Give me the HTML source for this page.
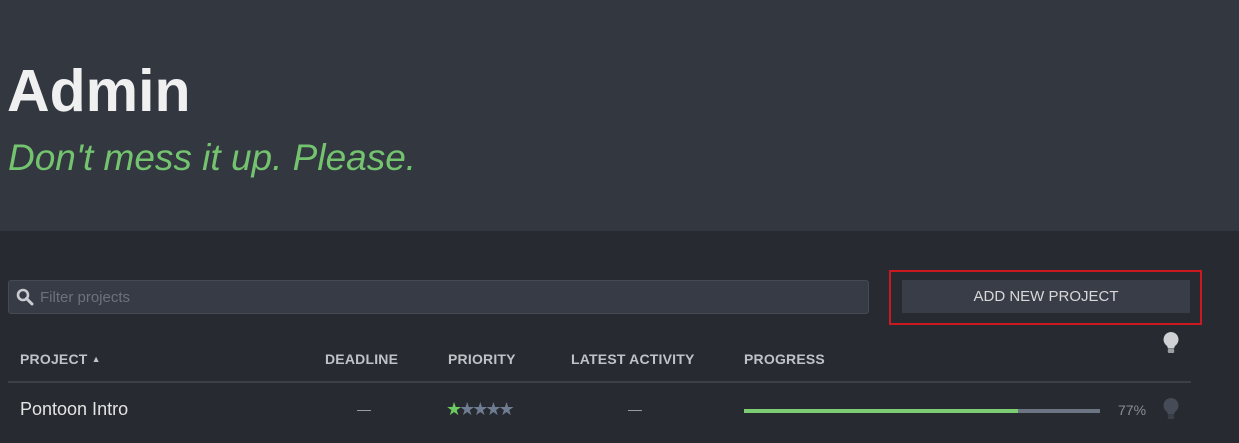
<!DOCTYPE html>
<html><head><meta charset="utf-8"><style>
body{margin:0;width:1239px;height:443px;background:#272a30;font-family:"Liberation Sans",sans-serif;overflow:hidden;position:relative}
.hdr{position:absolute;left:0;top:0;width:1239px;height:231px;background:#323740}
.t{position:absolute;left:7px;top:56px;font-size:59px;font-weight:bold;color:#f0f0f0;line-height:70px}
.s{position:absolute;left:8px;top:134px;font-size:37px;font-style:italic;color:#74c46f;line-height:48px}
.search{position:absolute;left:8px;top:280px;width:859px;height:32px;background:#373b45;border:1px solid #454a54;border-radius:3px}
.search span{position:absolute;left:31px;top:8px;font-size:15px;color:#6c717a}
.btn{position:absolute;left:902px;top:280px;width:288px;height:33px;background:#393d47;color:#d8d8d8;font-size:15px;text-align:center;line-height:33px}
.red{position:absolute;left:889px;top:270px;width:309px;height:51px;border:2px solid #cc1820}
.h{position:absolute;top:351px;font-size:14px;font-weight:bold;color:#bfc2c6;letter-spacing:0.2px}
.line{position:absolute;left:8px;top:381px;width:1183px;height:2px;background:#3b4049}
.r{position:absolute;top:399px;font-size:18px;color:#e4e4e4}
.dash{position:absolute;top:410px;width:14px;height:1px;background:#9a9da2}
</style></head><body>
<div class="hdr"></div>
<div class="t">Admin</div>
<div class="s">Don't mess it up. Please.</div>
<div class="search"><svg style="position:absolute;left:7px;top:7px" width="18" height="18" viewBox="0 0 18 18"><circle cx="7" cy="7" r="5" fill="none" stroke="#c8cbd0" stroke-width="2.6"/><line x1="10.5" y1="10.5" x2="16" y2="16" stroke="#c8cbd0" stroke-width="3" stroke-linecap="round"/></svg><span>Filter projects</span></div>
<div class="btn">ADD NEW PROJECT</div>
<div class="red"></div>
<div class="h" style="left:20px">PROJECT <span style="font-size:9px;position:relative;top:-2px">▲</span></div>
<div class="h" style="left:325px">DEADLINE</div>
<div class="h" style="left:448px">PRIORITY</div>
<div class="h" style="left:571px">LATEST ACTIVITY</div>
<div class="h" style="left:744px">PROGRESS</div>
<svg style="position:absolute;left:1162px;top:331px" width="18" height="24" viewBox="0 0 18 24"><path d="M9 1a7.5 7.5 0 0 0-4.5 13.5c1 1 1.3 2 1.3 3h6.4c0-1 .3-2 1.3-3A7.5 7.5 0 0 0 9 1z" fill="#cfd1d4"/><rect x="5.8" y="18" width="6.4" height="4" rx="1" fill="#9a9da2"/></svg>
<div class="line"></div>
<div class="r" style="left:20px">Pontoon Intro</div>
<div class="dash" style="left:357px"></div>
<div style="position:absolute;left:446px;top:399px;font-size:18px;letter-spacing:-3px;color:#6e7d92"><span style="color:#6ccb5f">★</span>★★★★</div>
<div class="dash" style="left:628px"></div>
<div style="position:absolute;left:744px;top:409px;width:356px;height:4px;background:#6c7583"><div style="width:274px;height:4px;background:#7ccc73"></div></div>
<div style="position:absolute;left:1118px;top:402px;font-size:14px;color:#8a8e94">77%</div>
<svg style="position:absolute;left:1162px;top:397px" width="18" height="24" viewBox="0 0 18 24"><path d="M9 1a7.5 7.5 0 0 0-4.5 13.5c1 1 1.3 2 1.3 3h6.4c0-1 .3-2 1.3-3A7.5 7.5 0 0 0 9 1z" fill="#454c58"/><rect x="5.8" y="18" width="6.4" height="4" rx="1" fill="#3a404a"/></svg>
</body></html>
